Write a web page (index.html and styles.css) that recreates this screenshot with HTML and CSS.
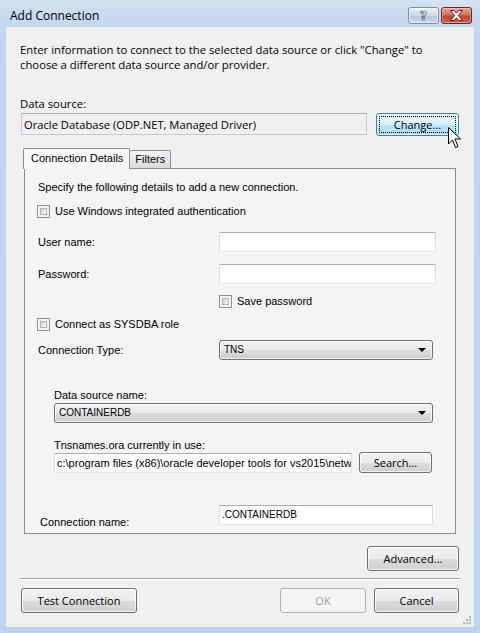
FILE: index.html
```html
<!DOCTYPE html>
<html lang="en">
<head>
  <meta charset="UTF-8" />
  <title>Add Connection</title>
  <link rel="stylesheet" href="styles.css">
</head>
<body>
  <div class="window">
    <div class="titlebar">
      <span class="title">Add Connection</span>
      <div class="caption-btns">
        <span class="cap help">?</span>
        <span class="cap close">
          <svg width="13" height="11" viewBox="0 0 13 11">
            <polygon points="0.5,0.5 4,0.5 6.5,3.2 9,0.5 12.5,0.5 8.3,5.5 12.5,10.5 9,10.5 6.5,7.8 4,10.5 0.5,10.5 4.7,5.5" fill="#fff" stroke="#5b2320" stroke-width="1" stroke-linejoin="round"/>
          </svg>
        </span>
      </div>
    </div>

    <div class="client">
      <p class="intro">Enter information to connect to the selected data source or click "Change" to<br>choose a different data source and/or provider.</p>

      <div class="ds-label">Data source:</div>
      <div class="ds-row">
        <div class="readonly">Oracle Database (ODP.NET, Managed Driver)</div>
        <button class="btn hot change"><span class="focus">Change...</span></button>
      </div>

      <div class="tabs">
        <div class="tab active">Connection Details</div>
        <div class="tab">Filters</div>
      </div>

      <div class="panel">
        <div class="desc">Specify the following details to add a new connection.</div>

        <label class="check row-win"><span class="box"></span>Use Windows integrated authentication</label>

        <div class="field row-user">
          <span class="field-label">User name:</span>
          <div class="textbox"></div>
        </div>
        <div class="field row-pass">
          <span class="field-label">Password:</span>
          <div class="textbox"></div>
        </div>
        <label class="check row-save"><span class="box"></span>Save password</label>
        <label class="check row-sysdba"><span class="box"></span>Connect as SYSDBA role</label>

        <div class="field row-type">
          <span class="field-label">Connection Type:</span>
          <div class="combo">TNS<span class="arrow"></span></div>
        </div>

        <div class="tns-group">
          <div class="sub-label dsn-label">Data source name:</div>
          <div class="combo">CONTAINERDB<span class="arrow"></span></div>

          <div class="sub-label ora-label">Tnsnames.ora currently in use:</div>
          <div class="ora-row">
            <div class="textbox path">c:\program files (x86)\oracle developer tools for vs2015\netw</div>
            <button class="btn search">Search...</button>
          </div>
        </div>

        <div class="field row-name">
          <span class="field-label">Connection name:</span>
          <div class="textbox name">.CONTAINERDB</div>
        </div>
      </div>

      <div class="adv-row">
        <button class="btn advanced">Advanced...</button>
      </div>

      <div class="sep"></div>

      <div class="actions">
        <button class="btn test">Test Connection</button>
        <div class="right-btns">
          <button class="btn ok" disabled>OK</button>
          <button class="btn cancel">Cancel</button>
        </div>
      </div>

      <!-- size grip -->
      <svg class="grip" width="9" height="9" viewBox="0 0 9 9">
        <rect x="6" y="0" width="2" height="2" fill="#b8b8b8"/>
        <rect x="3" y="3" width="2" height="2" fill="#b8b8b8"/>
        <rect x="6" y="3" width="2" height="2" fill="#b8b8b8"/>
        <rect x="0" y="6" width="2" height="2" fill="#b8b8b8"/>
        <rect x="3" y="6" width="2" height="2" fill="#b8b8b8"/>
        <rect x="6" y="6" width="2" height="2" fill="#b8b8b8"/>
      </svg>
    </div>

    <!-- mouse pointer resting on the Change button -->
    <svg class="pointer" width="14" height="22" viewBox="0 0 14 22">
      <path d="M0.5,0.5 L0.5,17 L4.5,13 L7.5,20.5 L10,19.5 L7,12 L12.5,12 Z" fill="#fff" stroke="#000" stroke-width="1" stroke-linejoin="miter"/>
    </svg>
  </div>
</body>
</html>
```

FILE: styles.css
```css
body {
  margin: 0;
}
.window {
  position: relative;
  width: 480px;
  height: 633px;
  background: linear-gradient(#d3e1f1, #c2d6ed 27px, #bdd3eb);
  font-family: "Open Sans", sans-serif;
  font-size: 11px;
  color: #000;
  overflow: hidden;
}

/* title bar */
.titlebar {
  height: 27px;
  display: flex;
  justify-content: space-between;
  align-items: flex-start;
}
.title {
  margin: 8px 0 0 10px;
  font-size: 12px;
  line-height: 16px;
}
.caption-btns {
  display: flex;
  gap: 2px;
  margin: 7px 8px 0 0;
}
.cap {
  box-sizing: border-box;
  width: 31px;
  height: 17px;
  border-radius: 3px;
  display: flex;
  align-items: center;
  justify-content: center;
}
.help {
  border: 1px solid #7b8ea6;
  background: linear-gradient(#e6eef8, #cbd9ea 50%, #b5c8de 51%, #c7d7ea);
  box-shadow: inset 0 0 0 1px rgba(255,255,255,0.6);
  color: #fff;
  font-family: "DejaVu Sans", sans-serif;
  font-weight: bold;
  font-size: 12px;
  -webkit-text-stroke: 0.7px #3d4f66;
}
.close {
  border: 1px solid #5e2a27;
  background: linear-gradient(#e8a493, #d6725f 45%, #c2452f 55%, #d0634c);
  box-shadow: inset 0 0 0 1px rgba(255,255,255,0.35);
}

/* client area */
.client {
  position: relative;
  box-sizing: border-box;
  height: 600px;
  margin: 0 6px;
  padding: 0 14px;
  background: #f0f0f0;
}
.intro {
  margin: 0;
  padding-top: 15px;
  font-size: 11.3px;
  line-height: 15px;
}
.ds-label {
  margin-top: 24px;
  font-size: 11.3px;
  line-height: 15px;
}
.ds-row {
  display: flex;
  margin-top: 2px;
  align-items: flex-start;
}
.readonly {
  box-sizing: border-box;
  width: 346px;
  height: 22px;
  margin-left: 1px;
  padding: 3px 2px;
  font-size: 11.2px;
  line-height: 15px;
  background: #f0f0f0;
  border: 1px solid #c6c9cf;
  border-top-color: #abadb3;
}

/* push buttons */
.btn {
  box-sizing: border-box;
  height: 25px;
  padding: 0;
  font-family: "Open Sans", sans-serif;
  font-size: 11px;
  color: #000;
  border: 1px solid #707070;
  border-radius: 3px;
  background: linear-gradient(#f2f2f2, #ebebeb 50%, #dddddd 51%, #cfcfcf);
  box-shadow: inset 0 0 0 1px rgba(255,255,255,0.75);
}
.btn.hot {
  border-color: #3c7fb1;
  background: linear-gradient(#eaf6fd, #d9f0fc 50%, #bee6fd 51%, #a7d9f5);
}
.change {
  width: 83px;
  height: 23px;
  margin-left: 9px;
  padding: 2px;
}
.focus {
  display: block;
  height: 100%;
  box-sizing: border-box;
  border: 1px dotted #000;
  line-height: 15px;
}
.btn:disabled {
  color: #a0a0a0;
  border-color: #adb2b5;
  background: #f4f4f4;
  box-shadow: none;
}

/* tabs */
.tabs {
  display: flex;
  align-items: flex-end;
  margin: 12px 0 0 3px;
  height: 20px;
  font-family: "Liberation Sans", sans-serif;
  font-size: 11px;
}
.tab {
  box-sizing: border-box;
  height: 18px;
  padding: 2px 5px 0;
  border: 1px solid #898c95;
  border-bottom: none;
  border-left: none;
  border-radius: 2px 2px 0 0;
  background: linear-gradient(#f3f3f3, #e8e8e8 50%, #d9d9d9);
}
.tab.active {
  position: relative;
  z-index: 1;
  height: 21px;
  margin-bottom: -1px;
  padding: 3px 6px 0 7px;
  border-left: 1px solid #898c95;
  background: #f8f8f8;
}

.panel {
  box-sizing: border-box;
  height: 366px;
  margin: 0 4px;
  padding: 10px 19px 8px 13px;
  border: 1px solid #898c95;
  background: #f4f4f4;
  font-family: "Liberation Sans", sans-serif;
  font-size: 11px;
}
.desc {
  height: 16px;
  line-height: 16px;
}
.check {
  display: flex;
  align-items: center;
  gap: 5px;
  height: 14px;
}
.box {
  position: relative;
  box-sizing: border-box;
  width: 13px;
  height: 13px;
  border: 1px solid #8e8f8f;
  background: #f4f4f4;
}
.box::after {
  content: "";
  position: absolute;
  inset: 2px;
  border: 1px solid #aeb3b9;
  background: linear-gradient(135deg, #cdd0d4, #f7f7f7);
}
.row-win { margin-top: 9px; margin-left: -1px; }
.row-save { margin-top: 10px; margin-left: 181px; }
.row-sysdba { margin-top: 9px; margin-left: -1px; }

.field {
  display: flex;
  align-items: center;
  height: 20px;
}
.field-label {
  width: 181px;
  flex-shrink: 0;
}
.row-user { margin-top: 14px; }
.row-pass { margin-top: 12px; }
.row-type { margin-top: 9px; }

.textbox {
  flex: 1;
  box-sizing: border-box;
  height: 20px;
  padding: 2px 2px;
  line-height: 14px;
  background: #fff;
  border: 1px solid #e3e9ef;
  border-top-color: #abadb3;
  border-left-color: #dbdfe6;
  border-right-color: #dbdfe6;
  white-space: nowrap;
  overflow: hidden;
}

.combo {
  position: relative;
  flex: 1;
  box-sizing: border-box;
  height: 20px;
  margin-right: 3px;
  padding: 2px 4px;
  line-height: 14px;
  border: 1px solid #707070;
  border-radius: 3px;
  background: linear-gradient(#f2f2f2, #ebebeb 50%, #dddddd 51%, #cfcfcf);
  box-shadow: inset 0 0 0 1px rgba(255,255,255,0.7);
  font-size: 10px;
}
.arrow {
  position: absolute;
  right: 6px;
  top: 7px;
  border-left: 4px solid transparent;
  border-right: 4px solid transparent;
  border-top: 4px solid #000;
}

.tns-group {
  padding-left: 16px;
}
.sub-label {
  height: 16px;
  line-height: 16px;
}
.dsn-label { margin-top: 27px; }
.ora-label { margin-top: 14px; }
.ora-row {
  display: flex;
  align-items: flex-start;
  gap: 7px;
  margin-right: 4px;
}
.textbox.path {
  flex: none;
  width: 298px;
  font-size: 11px;
}
.search {
  width: 73px;
  height: 21px;
  margin-top: -1px;
}

.row-name {
  margin-top: 32px;
  align-items: flex-end;
}
.row-name .field-label {
  width: 179px;
  padding-left: 2px;
  margin-bottom: -3px;
}
.textbox.name {
  margin-right: 3px;
  font-size: 10px;
}

/* bottom buttons */
.adv-row {
  display: flex;
  justify-content: flex-end;
  margin-top: 12px;
  padding-right: 1px;
}
.advanced { width: 92px; }
.sep {
  margin-top: 7px;
  height: 1px;
  background: #a0a0a0;
  box-shadow: 0 1px 0 #fff;
}
.actions {
  display: flex;
  justify-content: space-between;
  margin-top: 9px;
  padding: 0 1px;
}
.test { width: 116px; }
.right-btns {
  display: flex;
  gap: 8px;
}
.ok { width: 86px; }
.cancel { width: 85px; }

.grip {
  position: absolute;
  right: 2px;
  bottom: 2px;
}
.pointer {
  position: absolute;
  left: 448px;
  top: 127px;
}
```
